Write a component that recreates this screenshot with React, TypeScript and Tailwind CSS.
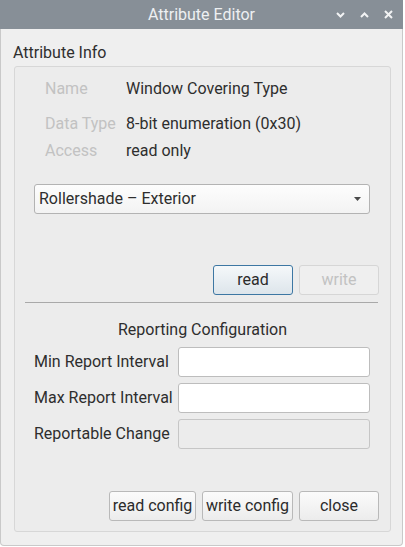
import React from 'react';

const font = { fontFamily: 'Roboto, "Noto Sans", sans-serif' };

function Btn({ children, w, kind = 'normal' }: { children: React.ReactNode; w: string; kind?: 'normal' | 'default' | 'disabled' }) {
  const base = 'h-[30px] rounded-[3px] border flex items-center justify-center text-[16px] leading-none ' + w;
  if (kind === 'default')
    return <div className={base + ' border-[#3d77a3] bg-gradient-to-b from-[#f5f8fa] to-[#dde5eb] text-[#2b2b2b]'}>{children}</div>;
  if (kind === 'disabled')
    return <div className={base + ' border-[#d6d6d6] bg-[#efefef] text-[#c2c2c2]'}>{children}</div>;
  return <div className={base + ' border-[#b9b9b9] bg-gradient-to-b from-[#fbfbfb] to-[#ececec] text-[#2b2b2b]'}>{children}</div>;
}

function Field({ label, disabled }: { label: string; disabled?: boolean }) {
  return (
    <div className="flex items-center h-[30px]">
      <div className="w-[144px] text-[16px] text-[#2e2e2e]">{label}</div>
      <div className={'w-[192px] h-[30px] rounded-[3px] border ' + (disabled ? 'bg-[#ececec] border-[#c6c6c6]' : 'bg-white border-[#bdbdbd]')} />
    </div>
  );
}

export default function App() {
  return (
    <div className="w-[405px] h-[547px] bg-white overflow-hidden" style={font}>
      <div className="w-[403px] h-[546px] flex flex-col rounded-b-[4px] border-x border-b border-[#c9c9c9] bg-[#efefef]">
        {/* title bar */}
        <div className="h-[29px] -mx-px bg-[#878f97] flex items-center relative">
          <div className="flex-1 text-center text-[16px] text-[#eef0f2] pt-px">Attribute Editor</div>
          <div className="absolute right-[10px] top-0 h-[29px] flex items-center gap-[15px]">
            <svg width="9" height="6" viewBox="0 0 9 6"><path d="M1 1 L4.5 4.5 L8 1" stroke="#f2f3f4" strokeWidth="2" fill="none" /></svg>
            <svg width="9" height="6" viewBox="0 0 9 6"><path d="M1 5 L4.5 1.5 L8 5" stroke="#f2f3f4" strokeWidth="2" fill="none" /></svg>
            <svg width="9" height="9" viewBox="0 0 9 9"><path d="M1 1 L8 8 M8 1 L1 8" stroke="#f2f3f4" strokeWidth="2" fill="none" /></svg>
          </div>
        </div>

        <div className="pl-[12px] mt-[15px] h-[18px] leading-[18px] text-[16px] text-[#2e2e2e]">Attribute Info</div>

        {/* group box */}
        <div className="ml-[13px] mt-[4px] w-[377px] h-[466px] border border-[#d7d7d7] rounded-[3px] bg-[#ececec] flex flex-col text-[#2e2e2e]">
          <div className="mt-[12px] pl-[30px] flex flex-col text-[16px]">
            <div className="flex h-5 items-center">
              <div className="w-[81px] text-[#c2c2c2]">Name</div>
              <div>Window Covering Type</div>
            </div>
            <div className="flex h-5 items-center mt-[15px]">
              <div className="w-[81px] text-[#c2c2c2]">Data Type</div>
              <div>8-bit enumeration (0x30)</div>
            </div>
            <div className="flex h-5 items-center mt-[7px]">
              <div className="w-[81px] text-[#c2c2c2]">Access</div>
              <div>read only</div>
            </div>
          </div>

          <div className="ml-[19px] mt-[23px] w-[336px] h-[30px] rounded-[3px] border border-[#b3b3b3] bg-gradient-to-b from-[#fdfdfd] to-[#f3f3f3] flex items-center pl-[4px] pr-[8px]">
            <div className="flex-1 text-[16px]">Rollershade – Exterior</div>
            <svg width="7" height="4" viewBox="0 0 7 4"><path d="M0 0 L7 0 L3.5 4 Z" fill="#4a4a4a" /></svg>
          </div>

          <div className="mt-[51px] pr-[11px] flex justify-end gap-[6px]">
            <Btn w="w-[80px]" kind="default">read</Btn>
            <Btn w="w-[80px]" kind="disabled">write</Btn>
          </div>

          <div className="mt-[7px] ml-[10px] mr-[12px] h-px bg-[#a9a9a9]" />

          <div className="mt-[17px] h-5 flex items-center justify-center text-[16px]">Reporting Configuration</div>

          <div className="mt-[7px] ml-[19px] flex flex-col gap-[6px]">
            <Field label="Min Report Interval" />
            <Field label="Max Report Interval" />
            <Field label="Reportable Change" disabled />
          </div>

          <div className="mt-[42px] pr-[11px] flex justify-end gap-[6px]">
            <Btn w="w-[87px]">read config</Btn>
            <Btn w="w-[91px]">write config</Btn>
            <Btn w="w-[80px]">close</Btn>
          </div>
        </div>
      </div>
    </div>
  );
}
